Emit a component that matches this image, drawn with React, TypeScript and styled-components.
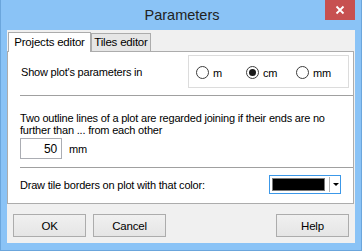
import styled, { createGlobalStyle } from "styled-components";

const Global = createGlobalStyle`
  html, body { margin: 0; padding: 0; background: #8ac3f6; }
  body { font-family: "Liberation Sans", Arial, sans-serif; }
`;

const Window = styled.div`
  width: 362px;
  height: 251px;
  box-sizing: border-box;
  background: #8ac3f6;
  border: 1px solid #6ba6dc;
  border-top: none;
  display: flex;
  flex-direction: column;
`;

const TitleBar = styled.div`
  height: 30px;
  display: grid;
  grid-template-columns: 1fr auto 1fr;
  align-items: start;
`;

const Title = styled.div`
  grid-column: 2;
  font-size: 14.5px;
  line-height: 30px;
  color: #222;
  padding-left: 2px;
`;

const CloseButton = styled.div`
  grid-column: 3;
  justify-self: end;
  width: 30px;
  height: 20px;
  margin-right: 6px;
  background: #c75050;
  display: flex;
  align-items: center;
  justify-content: center;
`;

const Client = styled.div`
  margin: 0 6px 0 6px;
  height: 213px;
  background: #f0f0f0;
  display: flex;
  flex-direction: column;
  font-size: 11px;
  letter-spacing: -0.2px;
  color: #000;
`;

const TabRow = styled.div`
  height: 21px;
  display: flex;
  align-items: flex-end;
  padding-left: 1px;
`;

const Tab = styled.div<{ $active?: boolean }>`
  box-sizing: border-box;
  width: ${(p) => (p.$active ? 83 : 60)}px;
  height: ${(p) => (p.$active ? 20 : 18)}px;
  padding-top: ${(p) => (p.$active ? 3 : 2)}px;
  text-align: center;
  border: 1px solid #acacac;
  border-bottom: none;
  background: ${(p) => (p.$active ? "#fff" : "#e6e6e6")};
  margin-bottom: ${(p) => (p.$active ? -1 : 0)}px;
  position: relative;
  z-index: ${(p) => (p.$active ? 1 : 0)};
  font-size: 11.5px;
  white-space: nowrap;
`;

const Panel = styled.div`
  box-sizing: border-box;
  height: 153px;
  margin-right: 1px;
  background: #fff;
  border: 1px solid #acacac;
  display: flex;
  flex-direction: column;
`;

const UnitsRow = styled.div`
  display: flex;
  align-items: center;
  height: 33px;
  margin-top: 3px;
  padding-left: 13px;
  padding-right: 4px;
`;

const Label = styled.div`
  flex: 1;
  white-space: nowrap;
`;

const RadioGroup = styled.div`
  box-sizing: border-box;
  width: 161px;
  height: 33px;
  border: 1px solid #dcdcdc;
  display: flex;
  align-items: center;
  padding-left: 7px;
  padding-top: 2px;
`;

const RadioItem = styled.div<{ $w: number }>`
  width: ${(p) => p.$w}px;
  display: flex;
  align-items: center;
  gap: 4px;
`;

const RadioCircle = styled.div<{ $on?: boolean }>`
  box-sizing: border-box;
  width: 13px;
  height: 13px;
  border-radius: 50%;
  border: 1px solid #3c3c3c;
  background: #fff;
  display: flex;
  align-items: center;
  justify-content: center;
  &::after {
    content: "";
    display: ${(p) => (p.$on ? "block" : "none")};
    width: 7px;
    height: 7px;
    border-radius: 50%;
    background: #1a1a1a;
  }
`;

const Separator = styled.div<{ $top: number }>`
  height: 1px;
  background: #a0a0a0;
  margin-left: 12px;
  margin-top: ${(p) => p.$top}px;
`;

const Paragraph = styled.div`
  margin-top: 16px;
  padding-left: 12px;
  line-height: 12px;
`;

const InputRow = styled.div`
  display: flex;
  align-items: center;
  gap: 7px;
  padding-left: 12px;
  margin-top: 2px;
`;

const NumberBox = styled.div`
  box-sizing: border-box;
  width: 42px;
  height: 21px;
  border: 1px solid #abadb3;
  text-align: right;
  padding: 3px 4px 0 0;
  font-size: 12px;
`;

const ColorRow = styled.div`
  display: flex;
  align-items: center;
  padding-left: 12px;
  padding-right: 12px;
  margin-top: 7px;
`;

const ColorCombo = styled.div`
  box-sizing: border-box;
  width: 72px;
  height: 19px;
  border: 1px solid #3c98e8;
  background: #fff;
  display: flex;
  align-items: center;
  padding-left: 2px;
`;

const Swatch = styled.div`
  box-sizing: border-box;
  width: 53px;
  height: 13px;
  background: #000;
  border: 1px solid #7a7a7a;
`;

const ComboDivider = styled.div`
  width: 1px;
  height: 15px;
  background: #b4b4b4;
  margin-left: 4px;
`;

const Arrow = styled.div`
  margin-left: 3px;
  width: 0;
  height: 0;
  border-left: 3px solid transparent;
  border-right: 3px solid transparent;
  border-top: 3px solid #000;
`;

const ButtonRow = styled.div`
  display: flex;
  gap: 7px;
  padding: 0 6px;
  margin-top: 10px;
`;

const Button = styled.div<{ $push?: boolean }>`
  box-sizing: border-box;
  width: 73px;
  height: 23px;
  border: 1px solid #acacac;
  background: linear-gradient(#f0f0f0, #e5e5e5);
  display: flex;
  align-items: center;
  justify-content: center;
  font-size: 11.5px;
  margin-left: ${(p) => (p.$push ? "auto" : "0")};
`;

const units = [
  { name: "m", w: 50, on: false },
  { name: "cm", w: 50, on: true },
  { name: "mm", w: 40, on: false },
];

export default function App() {
  return (
    <>
      <Global />
      <Window>
        <TitleBar>
          <Title>Parameters</Title>
          <CloseButton>
            <svg width="10" height="10" viewBox="0 0 10 10">
              <path d="M1.5 1.5 L8.5 8.5 M8.5 1.5 L1.5 8.5" stroke="#fff" strokeWidth="1.8" />
            </svg>
          </CloseButton>
        </TitleBar>
        <Client>
          <TabRow>
            <Tab $active>Projects editor</Tab>
            <Tab>Tiles editor</Tab>
          </TabRow>
          <Panel>
            <UnitsRow>
              <Label>Show plot's parameters in</Label>
              <RadioGroup>
                {units.map((u) => (
                  <RadioItem key={u.name} $w={u.w}>
                    <RadioCircle $on={u.on} />
                    {u.name}
                  </RadioItem>
                ))}
              </RadioGroup>
            </UnitsRow>
            <Separator $top={7} />
            <Paragraph>
              Two outline lines of a plot are regarded joining if their ends are no
              <br />
              further than ... from each other
            </Paragraph>
            <InputRow>
              <NumberBox>50</NumberBox>
              mm
            </InputRow>
            <Separator $top={8} />
            <ColorRow>
              <Label>Draw tile borders on plot with that color:</Label>
              <ColorCombo>
                <Swatch />
                <ComboDivider />
                <Arrow />
              </ColorCombo>
            </ColorRow>
          </Panel>
          <ButtonRow>
            <Button>OK</Button>
            <Button>Cancel</Button>
            <Button $push>Help</Button>
          </ButtonRow>
        </Client>
      </Window>
    </>
  );
}
